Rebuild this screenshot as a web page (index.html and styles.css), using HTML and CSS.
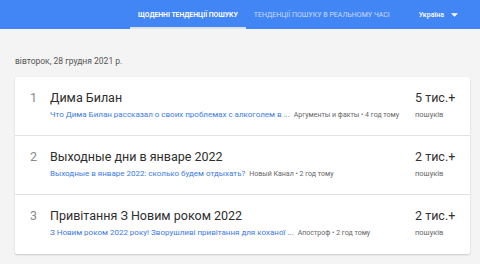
FILE: index.html
```html
<!DOCTYPE html>
<html lang="uk">
<head>
    <meta name="viewport" content="width=device-width, initial-scale=1.0">
    <title>Google Trends</title>
    <link rel="stylesheet" href="styles.css">
</head>
<body>
    <div class="header">
        <div class="tabs">
            <div class="tab active">ЩОДЕННІ ТЕНДЕНЦІЇ ПОШУКУ</div>
            <div class="tab">ТЕНДЕНЦІЇ ПОШУКУ В РЕАЛЬНОМУ ЧАСІ</div>
        </div>
        <div class="geo">
            <span>Україна</span>
            <svg width="7" height="4" viewBox="0 0 10 5"><path d="M0 0l5 5 5-5z" fill="#fff"/></svg>
        </div>
    </div>
    <div class="content">
        <p class="date">вівторок, 28 грудня 2021 р.</p>
        <div class="card">
            <div class="row">
                <div class="index">1</div>
                <div class="main">
                    <div class="title">Дима Билан</div>
                    <div class="sub">
                        <span class="link">Что Дима Билан рассказал о своих проблемах с алкоголем в ...</span>
                        <span class="source">Аргументы и факты • 4 год тому</span>
                    </div>
                </div>
                <div class="count">
                    <div class="num">5 тис.+</div>
                    <div class="label">пошуків</div>
                </div>
            </div>
            <div class="row">
                <div class="index">2</div>
                <div class="main">
                    <div class="title">Выходные дни в январе 2022</div>
                    <div class="sub">
                        <span class="link">Выходные в январе 2022: сколько будем отдыхать?</span>
                        <span class="source">Новый Канал • 2 год тому</span>
                    </div>
                </div>
                <div class="count">
                    <div class="num">2 тис.+</div>
                    <div class="label">пошуків</div>
                </div>
            </div>
            <div class="row">
                <div class="index">3</div>
                <div class="main">
                    <div class="title">Привітання З Новим роком 2022</div>
                    <div class="sub">
                        <span class="link">З Новим роком 2022 року! Зворушливі привітання для коханої ...</span>
                        <span class="source">Апостроф • 2 год тому</span>
                    </div>
                </div>
                <div class="count">
                    <div class="num">2 тис.+</div>
                    <div class="label">пошуків</div>
                </div>
            </div>
        </div>
    </div>
</body>
</html>
```

FILE: styles.css
```css
*{
    margin: 0;
    padding: 0;
    box-sizing: border-box;
    font-family: Roboto, sans-serif;
}
body{
    background: #f4f4f4;
    width: 480px;
    height: 264px;
    overflow: hidden;
}
.header{
    background: #4285f4;
    height: 29px;
    display: flex;
    justify-content: flex-end;
    align-items: stretch;
    padding-right: 22px;
    color: #fff;
}
.tabs{
    display: flex;
}
.tab{
    display: flex;
    align-items: center;
    padding: 2px 8px 0;
    font-size: 7px;
    color: rgba(255,255,255,0.72);
    border-bottom: 2px solid transparent;
}
.tab.active{
    font-size: 6.8px;
    font-weight: 700;
    color: #fff;
    border-bottom-color: #dde3ec;
}
.geo{
    display: flex;
    align-items: center;
    gap: 7px;
    margin-left: 21px;
    font-size: 7px;
    font-weight: 500;
}
.content{
    padding: 0 10px 0 15px;
}
.date{
    font-size: 8.5px;
    color: #555;
    margin-top: 27px;
    height: 21px;
}
.card{
    background: #fff;
    box-shadow: 0 1px 2px rgba(0,0,0,0.18);
    border-radius: 2px;
}
.row{
    display: flex;
    height: 59px;
    padding: 13px 0 0 15px;
    border-bottom: 1px solid #e2e2e2;
}
.row:last-child{
    border-bottom: 0;
}
.index{
    width: 20px;
    font-size: 12.5px;
    color: #8a8a8a;
    line-height: 16px;
}
.main{
    flex: 1;
}
.title{
    font-size: 12.5px;
    color: #2e2e2e;
    line-height: 16px;
}
.sub{
    margin-top: 4px;
    font-size: 8px;
    white-space: nowrap;
}
.link{
    color: #3d7ae4;
}
.source{
    color: #666;
    font-size: 7px;
    margin-left: 2px;
}
.count{
    width: 55px;
}
.num{
    font-size: 12.5px;
    color: #333;
    line-height: 16px;
}
.label{
    margin-top: 4px;
    font-size: 7.5px;
    color: #666;
}
```
